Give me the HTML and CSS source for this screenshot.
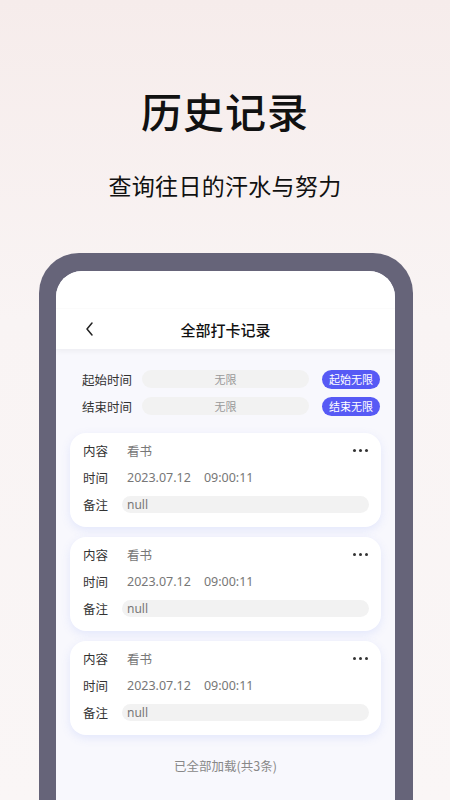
FILE: index.html
```html
<!DOCTYPE html>
<html lang="zh">
<head>
<meta charset="utf-8">
<link rel="stylesheet" href="styles.css">
</head>
<body>
<div class="page">
  <div class="hero">
    <h1 class="title">历史记录</h1>
    <p class="subtitle">查询往日的汗水与努力</p>
  </div>
  <div class="phone">
    <div class="screen">
      <div class="topbar">
        <div class="status"></div>
        <div class="nav">
          <svg class="back" width="12" height="16" viewBox="0 0 12 16"><path d="M8 2 L3 8 L8 14" fill="none" stroke="#222" stroke-width="1.5" stroke-linecap="round" stroke-linejoin="round"/></svg>
          <span class="nav-title">全部打卡记录</span>
        </div>
      </div>
      <div class="filters">
        <div class="filter-row">
          <span class="filter-label">起始时间</span>
          <span class="filter-input">无限</span>
          <span class="filter-btn">起始无限</span>
        </div>
        <div class="filter-row">
          <span class="filter-label">结束时间</span>
          <span class="filter-input">无限</span>
          <span class="filter-btn">结束无限</span>
        </div>
      </div>
      <div class="list">
        <div class="card">
          <div class="row"><span class="k">内容</span><span class="v">看书</span><span class="dots"><i></i><i></i><i></i></span></div>
          <div class="row"><span class="k">时间</span><span class="v">2023.07.12&nbsp;&nbsp;&nbsp;&nbsp;09:00:11</span></div>
          <div class="row"><span class="k">备注</span><span class="note">null</span></div>
        </div>
        <div class="card">
          <div class="row"><span class="k">内容</span><span class="v">看书</span><span class="dots"><i></i><i></i><i></i></span></div>
          <div class="row"><span class="k">时间</span><span class="v">2023.07.12&nbsp;&nbsp;&nbsp;&nbsp;09:00:11</span></div>
          <div class="row"><span class="k">备注</span><span class="note">null</span></div>
        </div>
        <div class="card">
          <div class="row"><span class="k">内容</span><span class="v">看书</span><span class="dots"><i></i><i></i><i></i></span></div>
          <div class="row"><span class="k">时间</span><span class="v">2023.07.12&nbsp;&nbsp;&nbsp;&nbsp;09:00:11</span></div>
          <div class="row"><span class="k">备注</span><span class="note">null</span></div>
        </div>
        <p class="end">已全部加载(共3条)</p>
      </div>
    </div>
  </div>
</div>
</body>
</html>
```
FILE: styles.css
```css
* { box-sizing: border-box; }
html, body { margin: 0; padding: 0; }
body {
  width: 450px;
  height: 800px;
  overflow: hidden;
  font-family: "Noto Sans CJK SC", "Noto Sans", sans-serif;
  background: linear-gradient(180deg, #f6eceb 0%, #f9f4f4 40%, #faf6f6 100%);
  color: #111;
}
.page { display: flex; flex-direction: column; height: 800px; }
.hero { display: flex; flex-direction: column; align-items: center; padding-top: 84px; }
.title {
  margin: 0;
  font-size: 41px;
  line-height: 52px;
  font-weight: 500;
  letter-spacing: 1px;
  color: #111;
}
.subtitle {
  margin: 34px 0 0;
  font-size: 23px;
  line-height: 30px;
  font-weight: 400;
  letter-spacing: 0.3px;
  color: #111;
}
.phone {
  margin: 53px 37px 0 39px;
  flex: 1;
  background: #666479;
  border-radius: 40px 40px 0 0;
  padding: 18px 18px 0 17px;
  display: flex;
}
.screen {
  flex: 1;
  background: #f8f8fd;
  border-radius: 26px 26px 0 0;
  overflow: hidden;
  display: flex;
  flex-direction: column;
}
.topbar {
  background: #fff;
  box-shadow: 0 2px 6px rgba(0,0,0,0.05);
  position: relative;
  z-index: 1;
}
.status { height: 38px; border-bottom: 1px solid #fbfbfb; }
.nav {
  height: 40px;
  display: flex;
  align-items: center;
  justify-content: center;
  position: relative;
}
.back { position: absolute; left: 28px; top: 12px; }
.nav-title { font-size: 15px; font-weight: 500; color: #111; }
.filters {
  padding: 21px 14px 0 26px;
  display: flex;
  flex-direction: column;
  gap: 9px;
}
.filter-row { display: flex; align-items: center; height: 18px; }
.filter-label { width: 60px; font-size: 12.5px; color: #333; }
.filter-input {
  width: 167px;
  height: 18px;
  border-radius: 9px;
  background: #f2f2f2;
  font-size: 11px;
  color: #999;
  display: flex;
  align-items: center;
  justify-content: center;
}
.filter-btn {
  margin-left: 13px;
  width: 58px;
  height: 19px;
  border-radius: 9.5px;
  background: #575af5;
  color: #fff;
  font-size: 11px;
  display: flex;
  align-items: center;
  justify-content: center;
}
.list {
  padding: 18px 14px 0;
  display: flex;
  flex-direction: column;
  gap: 10px;
}
.card {
  background: #fff;
  border-radius: 16px;
  padding: 4px 12px 9px 13px;
  box-shadow: 0 3px 10px rgba(120,140,240,0.16);
  display: flex;
  flex-direction: column;
}
.row { display: flex; align-items: center; height: 27px; }
.k { width: 44px; font-size: 12.5px; color: #333; }
.v { font-size: 12.5px; color: #777; font-family: "Noto Sans", "Noto Sans CJK SC", sans-serif; }
.row:first-child .v { font-family: "Noto Sans CJK SC", sans-serif; }
.dots { margin-left: auto; margin-right: 1px; display: flex; gap: 3px; }
.dots i { display: block; width: 3px; height: 3px; border-radius: 50%; background: #333; }
.note {
  margin-left: -5px;
  flex: 1;
  height: 17px;
  border-radius: 8.5px;
  background: #f2f2f2;
  padding-left: 5px;
  font-family: "Noto Sans", sans-serif;
  font-size: 12px;
  color: #777;
  display: flex;
  align-items: center;
}
.end {
  margin: 11px 0 0;
  text-align: center;
  font-size: 12.5px;
  color: #888;
}
```
